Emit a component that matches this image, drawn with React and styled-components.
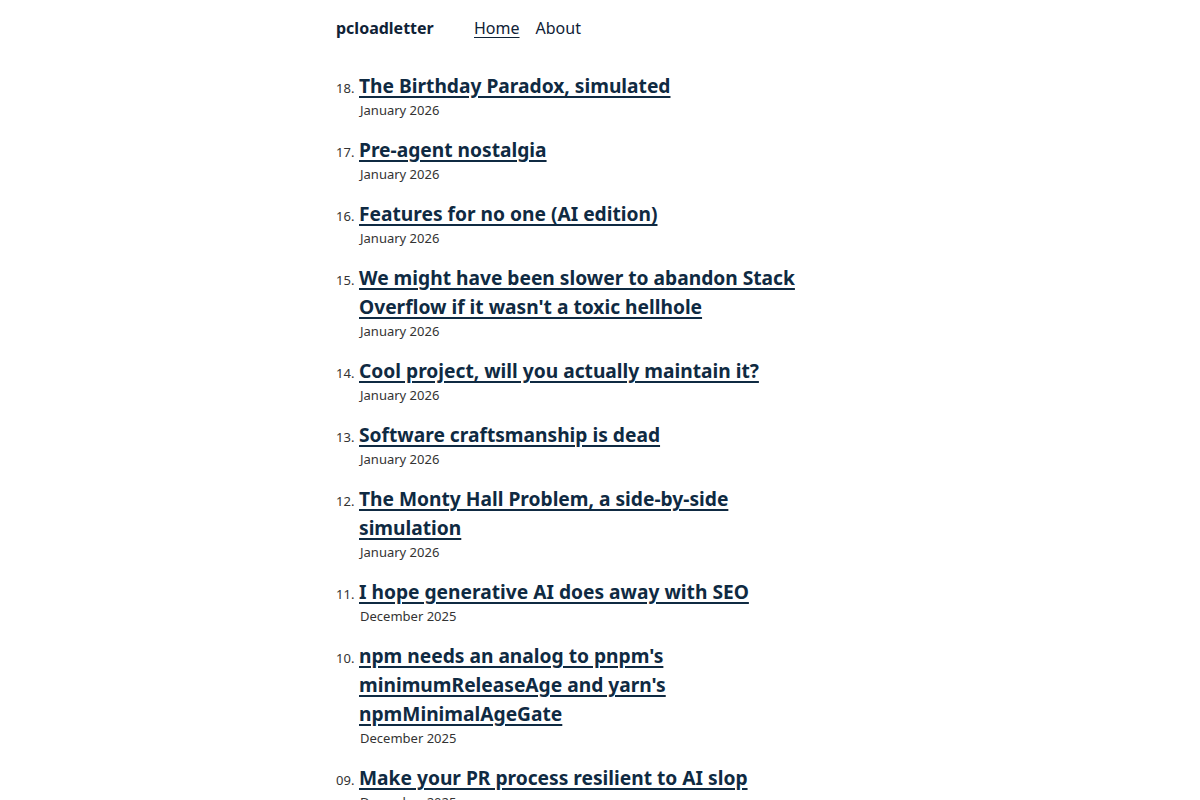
import React from 'react'
import styled, { createGlobalStyle } from 'styled-components'

const GlobalStyle = createGlobalStyle`
  body {
    margin: 0;
    background: #fff;
    font-family: "Noto Sans", "DejaVu Sans", sans-serif;
    color: #1b1b1b;
  }
`

const posts = [
  { n: 18, title: 'The Birthday Paradox, simulated', date: 'January 2026' },
  { n: 17, title: 'Pre-agent nostalgia', date: 'January 2026' },
  { n: 16, title: 'Features for no one (AI edition)', date: 'January 2026' },
  { n: 15, title: "We might have been slower to abandon Stack Overflow if it wasn't a toxic hellhole", date: 'January 2026' },
  { n: 14, title: 'Cool project, will you actually maintain it?', date: 'January 2026' },
  { n: 13, title: 'Software craftsmanship is dead', date: 'January 2026' },
  { n: 12, title: 'The Monty Hall Problem, a side-by-side simulation', date: 'January 2026' },
  { n: 11, title: 'I hope generative AI does away with SEO', date: 'December 2025' },
  { n: 10, title: "npm needs an analog to pnpm's minimumReleaseAge and yarn's npmMinimalAgeGate", date: 'December 2025' },
  { n: 9, title: 'Make your PR process resilient to AI slop', date: 'December 2025' },
]

const Page = styled.div`
  width: 528px;
  margin: 0 auto;
  padding-top: 16px;
`

const Header = styled.header`
  display: flex;
  align-items: center;
  height: 24px;
`

const Brand = styled.a`
  font-size: 16px;
  font-weight: 700;
  color: #0f2236;
  text-decoration: none;
  width: 138px;
`

const Nav = styled.nav`
  display: flex;
  gap: 16px;
`

const NavLink = styled.a`
  font-size: 16px;
  color: #0f2236;
  text-decoration: ${(p) => (p.$active ? 'underline' : 'none')};
  text-underline-offset: 3px;
  text-decoration-thickness: 1px;
`

const PostList = styled.ol`
  list-style: none;
  margin: 0;
  padding: 31px 0 0;
  max-width: 480px;
  display: flex;
  flex-direction: column;
  gap: 15px;
`

const Post = styled.li`
  display: flex;
  align-items: baseline;
`

const Num = styled.span`
  flex: 0 0 23px;
  font-size: 13px;
  color: #333;
`

const Body = styled.div`
  display: flex;
  flex-direction: column;
`

const Title = styled.a`
  font-size: 19.2px;
  font-weight: 700;
  line-height: 29px;
  color: #0f2a42;
  text-decoration: underline;
  text-underline-offset: 3px;
  text-decoration-thickness: 2px;
`

const Date = styled.span`
  font-size: 13px;
  line-height: 19px;
  color: #333;
  padding-left: 1px;
  margin-top: 1px;
`

export default function App() {
  return (
    <>
      <GlobalStyle />
      <Page>
        <Header>
          <Brand href="#">pcloadletter</Brand>
          <Nav>
            <NavLink href="#" $active>Home</NavLink>
            <NavLink href="#">About</NavLink>
          </Nav>
        </Header>
        <PostList>
          {posts.map((p) => (
            <Post key={p.n}>
              <Num>{String(p.n).padStart(2, '0')}.</Num>
              <Body>
                <Title href="#">{p.title}</Title>
                <Date>{p.date}</Date>
              </Body>
            </Post>
          ))}
        </PostList>
      </Page>
    </>
  )
}
